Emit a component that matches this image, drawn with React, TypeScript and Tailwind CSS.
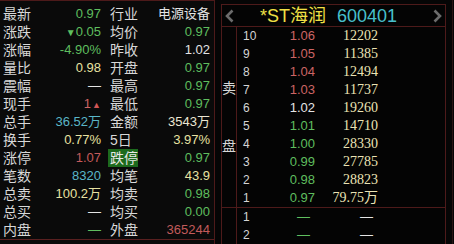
import type { ReactNode } from 'react'

interface Cell {
  label: string
  value: ReactNode
  color: string
  highlight?: boolean
}

const green = 'text-[#5fbe5f]'
const red = 'text-[#cc6464]'
const white = 'text-[#e4e4e4]'
const yellow = 'text-[#e8e2a2]'
const cyan = 'text-[#5ab6c8]'

const quoteRows: [Cell, Cell][] = [
  [
    { label: '最新', value: '0.97', color: green },
    { label: '行业', value: '电源设备', color: white },
  ],
  [
    {
      label: '涨跌',
      value: (
        <>
          <span className="text-[10px]">▼</span>0.05
        </>
      ),
      color: green,
    },
    { label: '均价', value: '0.97', color: green },
  ],
  [
    { label: '涨幅', value: '-4.90%', color: green },
    { label: '昨收', value: '1.02', color: white },
  ],
  [
    { label: '量比', value: '0.98', color: yellow },
    { label: '开盘', value: '0.97', color: green },
  ],
  [
    { label: '震幅', value: '—', color: white },
    { label: '最高', value: '0.97', color: green },
  ],
  [
    {
      label: '现手',
      value: (
        <>
          1<span className="ml-[1px] text-[9px] text-[#d05656]">▲</span>
        </>
      ),
      color: red,
    },
    { label: '最低', value: '0.97', color: green },
  ],
  [
    { label: '总手', value: '36.52万', color: cyan },
    { label: '金额', value: '3543万', color: 'text-[#ebe6d2]' },
  ],
  [
    { label: '换手', value: '0.77%', color: yellow },
    { label: '5日', value: '3.97%', color: yellow },
  ],
  [
    { label: '涨停', value: '1.07', color: 'text-[#c45a5a]' },
    { label: '跌停', value: '0.97', color: green, highlight: true },
  ],
  [
    { label: '笔数', value: '8320', color: cyan },
    { label: '均笔', value: '43.9', color: yellow },
  ],
  [
    { label: '总卖', value: '100.2万', color: yellow },
    { label: '均卖', value: '0.98', color: green },
  ],
  [
    { label: '总买', value: '—', color: white },
    { label: '均买', value: '0.00', color: green },
  ],
  [
    { label: '内盘', value: '—', color: green },
    { label: '外盘', value: '365244', color: 'text-[#c25b5b]' },
  ],
]

const sellLevels = [
  { level: 10, price: '1.06', color: red, volume: '12202' },
  { level: 9, price: '1.05', color: red, volume: '11385' },
  { level: 8, price: '1.04', color: red, volume: '12494' },
  { level: 7, price: '1.03', color: red, volume: '11737' },
  { level: 6, price: '1.02', color: white, volume: '19260' },
  { level: 5, price: '1.01', color: green, volume: '14710' },
  { level: 4, price: '1.00', color: green, volume: '28330' },
  { level: 3, price: '0.99', color: green, volume: '27785' },
  { level: 2, price: '0.98', color: green, volume: '28823' },
  { level: 1, price: '0.97', color: green, volume: '79.75万' },
]

const buyLevels = [1, 2]

function QuoteCell({ cell, className }: { cell: Cell; className: string }) {
  return (
    <div className={`flex items-center justify-between ${className}`}>
      <span
        className={
          cell.highlight
            ? 'bg-[#1d6a1d] pl-[2px] text-[14px] text-[#e8e8e8]'
            : 'pl-[2px] text-[14px] text-[#d8d8d8]'
        }
      >
        {cell.label}
      </span>
      <span className={`text-[13px] ${cell.color}`}>{cell.value}</span>
    </div>
  )
}

function Chevron({ dir }: { dir: 'left' | 'right' }) {
  return (
    <svg width="9" height="14" viewBox="0 0 9 14">
      <polyline
        points={dir === 'left' ? '7.5,1.5 2,7 7.5,12.5' : '1.5,1.5 7,7 1.5,12.5'}
        fill="none"
        stroke="#6c6c6c"
        strokeWidth="2.6"
      />
    </svg>
  )
}

export default function App() {
  return (
    <div className="flex h-[244px] w-[454px] overflow-hidden bg-[#050505] font-['Liberation_Sans','Noto_Sans_CJK_SC',sans-serif] leading-[18px]">
      {/* quote panel */}
      <div className="flex w-[215px] shrink-0 flex-col border-r border-t border-[#4d1a1a] bg-[#0a0a0a] pt-[4px]">
        {quoteRows.map(([a, b]) => (
          <div key={a.label} className="flex h-[18px]">
            <QuoteCell cell={a} className="w-[107px] pl-[1px] pr-[6px]" />
            <QuoteCell cell={b} className="w-[107px] pl-[1px] pr-[4px]" />
          </div>
        ))}
        <div className="flex gap-[28px] border-t border-[#5a2020] pl-[42px] pt-[2px] text-[14px] text-[#e8e8e8]">
          <span>评论资讯</span>
          <span>简况</span>
          <span>相关</span>
        </div>
      </div>

      {/* order book */}
      <div className="ml-[6px] mt-[4px] flex w-[225px] shrink-0 flex-col border-x border-t border-[#4d1a1a] bg-[#040404]">
        <div className="flex h-[29px] items-center border-b border-[#4d1a1a] pl-[3px] pr-[3px] text-[18px]">
          <Chevron dir="left" />
          <span className="ml-[26px] w-[77px] text-[#f0e046]">*ST海润</span>
          <span className="text-[#48c0cc]">600401</span>
          <span className="ml-auto flex">
            <Chevron dir="right" />
          </span>
        </div>

        <div className="flex border-b border-[#4d1a1a]">
          <div className="flex w-[15px] flex-col items-center justify-center gap-[40px] border-r border-[#4d1a1a] text-[14px] text-[#d8d8d8]">
            <span>卖</span>
            <span>盘</span>
          </div>
          <div className="flex flex-col">
            {sellLevels.map((row) => (
              <div key={row.level} className="flex h-[18px] items-center pl-[6px]">
                <span className="w-[30px] text-[12px] text-[#d4d4d4]">{row.level}</span>
                <span className={`w-[42px] text-right text-[13px] ${row.color}`}>{row.price}</span>
                <span className="w-[63px] text-right font-['Liberation_Serif','Noto_Sans_CJK_SC',serif] text-[14px] text-[#ebe3b4]">
                  {row.volume}
                </span>
              </div>
            ))}
          </div>
        </div>

        <div className="flex">
          <div className="w-[15px] border-r border-[#4d1a1a]" />
          <div className="flex flex-col">
            {buyLevels.map((level) => (
              <div key={level} className="flex h-[18px] items-center pl-[6px]">
                <span className="w-[30px] text-[12px] text-[#d4d4d4]">{level}</span>
                <span className={`w-[42px] pr-[5px] text-right text-[13px] ${green}`}>—</span>
                <span className="w-[63px] pr-[5px] text-right text-[13px] text-[#e4e4e4]">—</span>
              </div>
            ))}
          </div>
        </div>
      </div>

      {/* edge strip */}
      <div className="flex w-[8px] shrink-0">
        <div className="w-[6px]" />
        <div className="w-px bg-[#2a1414]" />
      </div>
    </div>
  )
}
